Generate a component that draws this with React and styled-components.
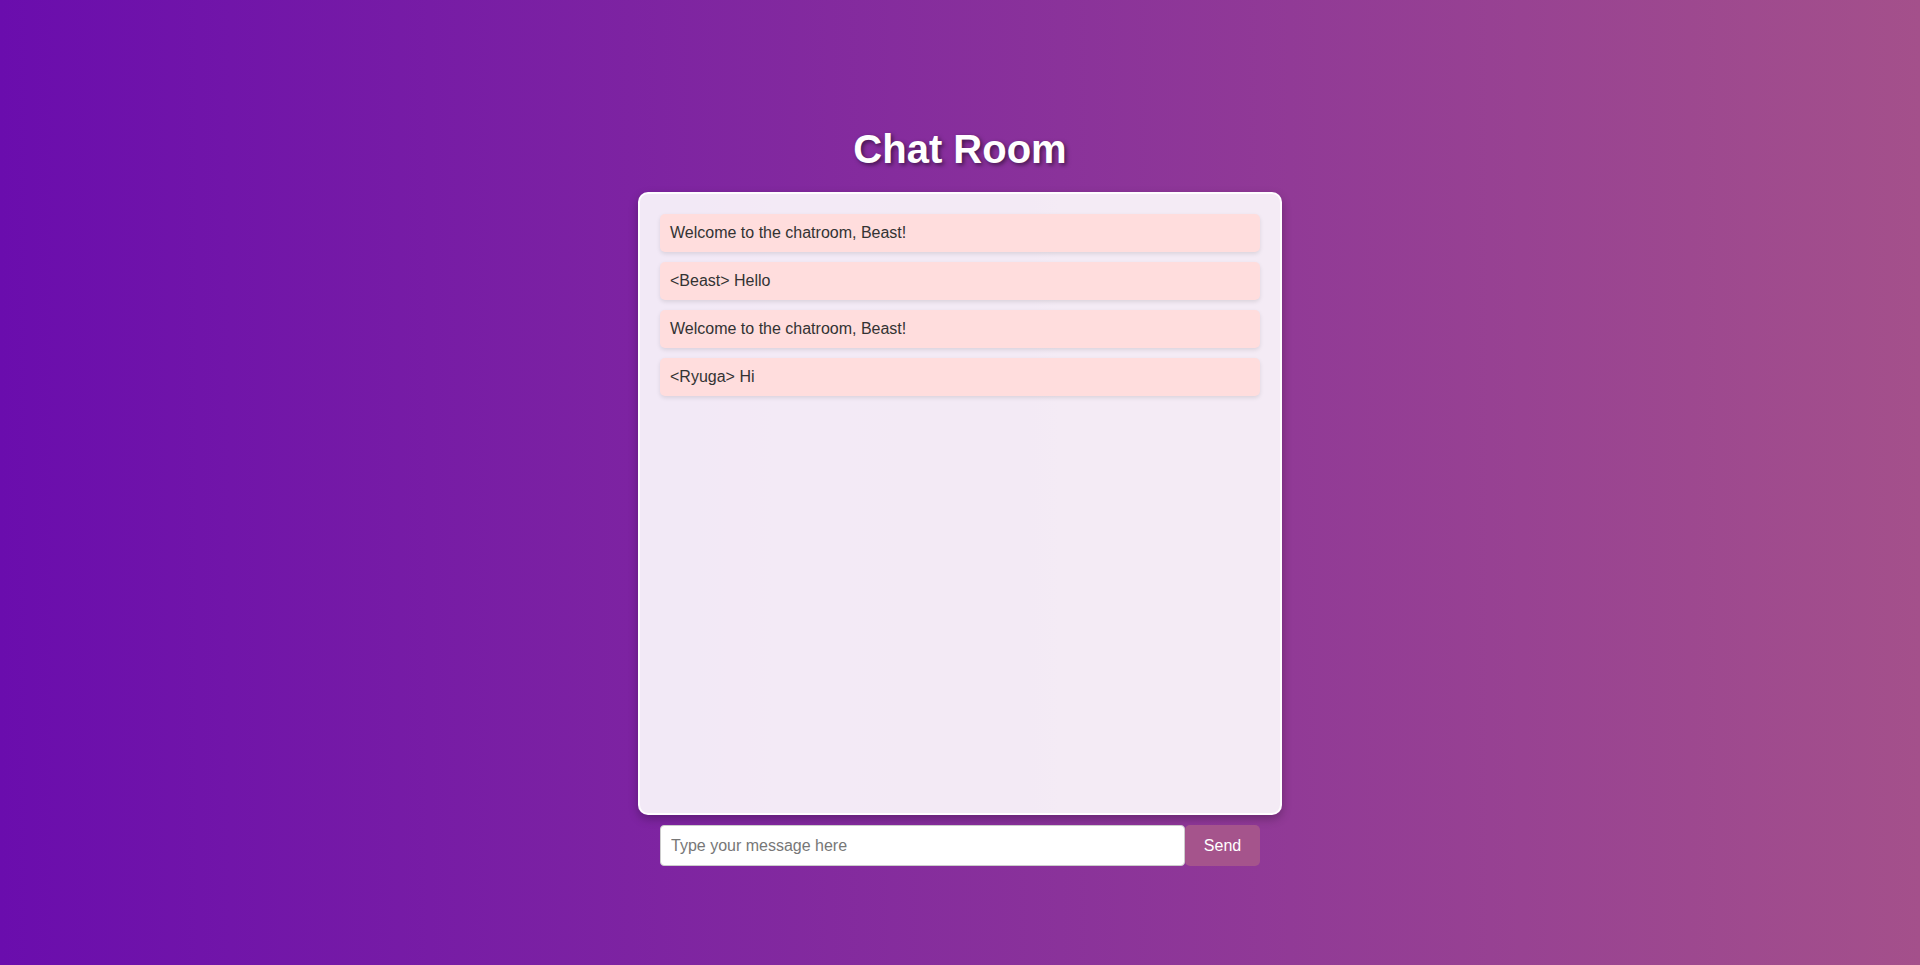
import React from 'react';
import styled, { createGlobalStyle } from 'styled-components';

const GlobalStyle = createGlobalStyle`
  html, body {
    margin: 0;
    padding: 0;
  }
  body {
    font-family: "Liberation Sans", Arial, sans-serif;
    background: linear-gradient(to right, #6a0dad, #a4508b);
    min-height: 100vh;
  }
`;

const Page = styled.div`
  display: flex;
  flex-direction: column;
  align-items: center;
  min-height: 100vh;
  padding-top: 126px;
  box-sizing: border-box;
`;

const Title = styled.h1`
  margin: 0 0 20px;
  font-size: 40px;
  line-height: 46px;
  font-weight: bold;
  color: #fff;
  text-shadow: 2px 2px 4px rgba(0, 0, 0, 0.5);
`;

const ChatBox = styled.div`
  width: 600px;
  height: 579px;
  padding: 20px;
  background: rgba(255, 255, 255, 0.9);
  border: 2px solid rgba(255, 255, 255, 0.95);
  border-radius: 10px;
  box-shadow: 0 4px 10px rgba(0, 0, 0, 0.25);
  display: flex;
  flex-direction: column;
  gap: 10px;
  overflow-y: auto;
`;

const Message = styled.div`
  background: #ffdddd;
  color: #333;
  padding: 10px;
  font-size: 16px;
  line-height: 18px;
  border-radius: 5px;
  box-shadow: 0 2px 4px rgba(0, 0, 0, 0.1);
`;

const Form = styled.form`
  display: flex;
  width: 600px;
  margin-top: 10px;
`;

const Input = styled.input`
  flex: 1;
  height: 41px;
  box-sizing: border-box;
  padding: 0 10px;
  font-family: "Liberation Sans", Arial, sans-serif;
  font-size: 16px;
  border: 1px solid #ccc;
  border-radius: 4px;
  background: #fff;
  outline: none;

  &::placeholder {
    color: #777;
  }
`;

const SendButton = styled.button`
  width: 75px;
  height: 41px;
  border: none;
  border-radius: 5px;
  background: #a5548c;
  color: #fff;
  font-family: "Liberation Sans", Arial, sans-serif;
  font-size: 16px;
  cursor: pointer;
`;

const messages = [
  'Welcome to the chatroom, Beast!',
  '<Beast> Hello',
  'Welcome to the chatroom, Beast!',
  '<Ryuga> Hi',
];

export default function App() {
  return (
    <>
      <GlobalStyle />
      <Page>
        <Title>Chat Room</Title>
        <ChatBox>
          {messages.map((m, i) => (
            <Message key={i}>{m}</Message>
          ))}
        </ChatBox>
        <Form onSubmit={(e) => e.preventDefault()}>
          <Input type="text" placeholder="Type your message here" />
          <SendButton type="submit">Send</SendButton>
        </Form>
      </Page>
    </>
  );
}
